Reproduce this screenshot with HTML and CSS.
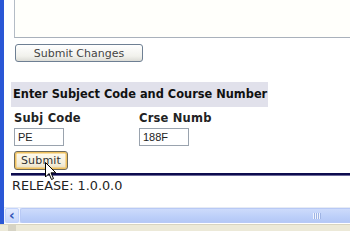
FILE: index.html
```html
<!DOCTYPE html>
<html>
<head>
<meta charset="utf-8">
<link rel="stylesheet" href="styles.css">
</head>
<body>
<div class="window">
  <div class="frame">
    <div class="content">
      <div class="textarea"></div>
      <button class="btn btn-changes">Submit Changes</button>
      <div class="band">Enter Subject Code and Course Number</div>
      <div class="fields">
        <div class="field">
          <div class="label">Subj Code</div>
          <div class="input">PE</div>
        </div>
        <div class="field field-2">
          <div class="label">Crse Numb</div>
          <div class="input">188F</div>
        </div>
      </div>
      <div class="submit-row">
        <button class="btn btn-submit">Submit</button>
        <svg class="cursor" width="12" height="19" viewBox="0 0 12 19"><path d="M0.5 0.5 L0.5 15 L4 11.5 L6.5 17.5 L8.5 16.6 L6 10.8 L10.8 10.8 Z" fill="#fff" stroke="#000" stroke-width="1"/></svg>
      </div>
      <div class="rule"></div>
      <div class="release">RELEASE: 1.0.0.0</div>
    </div>
    <div class="hscroll">
      <div class="arrow">&lsaquo;</div>
      <div class="thumb"><span class="grip"></span></div>
    </div>
  </div>
  <div class="status"><span class="status-box"></span></div>
</div>
</body>
</html>
```
FILE: styles.css
```css
html, body {
  margin: 0;
  padding: 0;
  background: #fff;
}
.window {
  width: 350px;
  height: 231px;
  display: flex;
  flex-direction: column;
  overflow: hidden;
}
.frame {
  flex: 1;
  display: flex;
  flex-direction: column;
  border-left: 4px solid #2a57d6;
  min-height: 0;
}
.content {
  flex: 1;
  padding-left: 7px;
  font-family: "DejaVu Sans", Verdana, sans-serif;
  color: #111;
  min-height: 0;
  overflow: hidden;
}
.textarea {
  margin-left: 3px;
  height: 37px;
  border-left: 1px solid #b4bcc6;
  border-bottom: 1px solid #a9b1bb;
  background: #fffffb;
}
.btn {
  display: block;
  font-family: "DejaVu Sans", Verdana, sans-serif;
  font-size: 11px;
  color: #333;
  padding: 0;
  cursor: default;
}
.btn-changes {
  margin: 6px 0 0 4px;
  width: 128px;
  height: 18px;
  border: 1px solid #6e7f93;
  border-radius: 3px;
  background: linear-gradient(#ffffff, #f1f1ec 70%, #dcdcd6);
  color: #444;
}
.band {
  margin-top: 20px;
  width: 255px;
  height: 25px;
  padding-left: 2px;
  background: #e1e1eb;
  font-size: 11.4px;
  font-weight: bold;
  line-height: 25px;
  color: #111;
  white-space: nowrap;
}
.fields {
  display: flex;
  margin-top: 4px;
  padding-left: 3px;
}
.field {
  width: 125px;
}
.label {
  font-size: 11.5px;
  font-weight: bold;
  line-height: 15px;
  color: #222;
  letter-spacing: 0.2px;
}
.input {
  margin-top: 2px;
  width: 45px;
  height: 16px;
  border: 1px solid #9aa3ae;
  font-family: "Liberation Sans", Arial, sans-serif;
  font-size: 11px;
  line-height: 16px;
  padding-left: 3px;
  box-sizing: content-box;
  color: #222;
}
.field-2 .input {
  width: 45px;
}
.submit-row {
  position: relative;
  margin-top: 5px;
  padding-left: 3px;
  height: 20px;
}
.btn-submit {
  width: 54px;
  height: 19px;
  border: 1px solid #6d6a5b;
  border-radius: 3px;
  background: linear-gradient(#fffbee, #f4eedb 70%, #e6dcbf);
  box-shadow: inset 0 0 0 1.5px #f0c15e;
  color: #333;
  letter-spacing: 0.2px;
}
.cursor {
  position: absolute;
  left: 34px;
  top: 11px;
}
.rule {
  margin-top: 2px;
  height: 2px;
  background: #0d0b4e;
  border-bottom: 1px solid #6d6a9a;
}
.release {
  margin-top: 2px;
  padding-left: 1px;
  font-size: 12.8px;
  line-height: 15px;
  color: #222;
  white-space: nowrap;
}
.hscroll {
  height: 15px;
  display: flex;
  align-items: stretch;
  background: linear-gradient(#f3f6fe, #e8eefc);
  border-top: 1px solid #e6ebf5;
  margin-bottom: 1px;
}
.arrow {
  width: 14px;
  margin-left: 1px;
  border: 1px solid #c3d3fb;
  border-radius: 2px;
  background: linear-gradient(#e2eafe, #c7d6fb);
  color: #3154b6;
  font-family: "DejaVu Sans", sans-serif;
  font-size: 14px;
  font-weight: bold;
  line-height: 12px;
  text-align: center;
  box-sizing: border-box;
}
.thumb {
  flex: 1;
  margin-left: 1px;
  border: 1px solid #b8c9f5;
  border-right: none;
  border-radius: 2px 0 0 2px;
  background: linear-gradient(#cddbfb, #bccff9 60%, #b4c8f6);
  position: relative;
}
.grip {
  position: absolute;
  left: 292px;
  top: 4px;
  width: 8px;
  height: 6px;
  background: repeating-linear-gradient(90deg, #eef3fe 0 1px, #9fb4e4 1px 2px);
}
.status {
  height: 6px;
  background: #ece9d8;
  border-top: 1px solid #d8d4c0;
}
.status-box {
  display: block;
  margin-left: 8px;
  width: 8px;
  height: 6px;
  background: #d6d3c4;
}
```
